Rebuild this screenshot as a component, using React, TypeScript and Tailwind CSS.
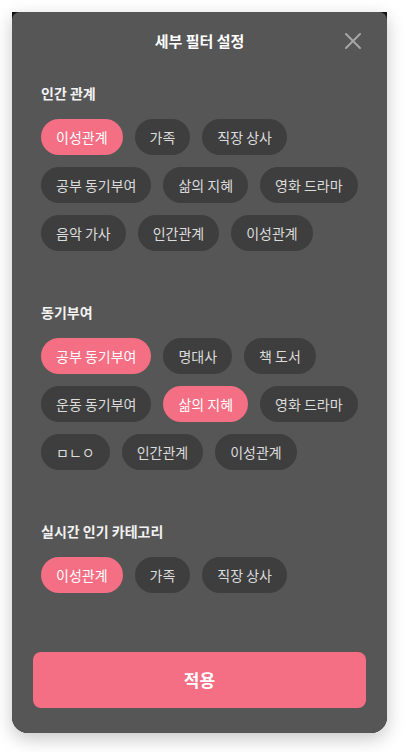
type Chip = { label: string; active?: boolean };

const sections: { title: string; chips: Chip[] }[] = [
  {
    title: "인간 관계",
    chips: [
      { label: "이성관계", active: true },
      { label: "가족" },
      { label: "직장 상사" },
      { label: "공부 동기부여" },
      { label: "삶의 지혜" },
      { label: "영화 드라마" },
      { label: "음악 가사" },
      { label: "인간관계" },
      { label: "이성관계" },
    ],
  },
  {
    title: "동기부여",
    chips: [
      { label: "공부 동기부여", active: true },
      { label: "명대사" },
      { label: "책 도서" },
      { label: "운동 동기부여" },
      { label: "삶의 지혜", active: true },
      { label: "영화 드라마" },
      { label: "ㅁㄴㅇ" },
      { label: "인간관계" },
      { label: "이성관계" },
    ],
  },
  {
    title: "실시간 인기 카테고리",
    chips: [
      { label: "이성관계", active: true },
      { label: "가족" },
      { label: "직장 상사" },
    ],
  },
];

export default function App() {
  return (
    <div
      className="min-h-[752px] bg-white p-3"
      style={{ fontFamily: '"Noto Sans CJK KR", "Noto Sans", sans-serif' }}
    >
      <div className="w-[375px] rounded-b-2xl bg-[#111] shadow-[0_6px_18px_rgba(0,0,0,0.22)]">
        <div className="flex flex-col rounded-t-lg rounded-b-2xl bg-[#565656] pb-[25px]">
          <header className="relative flex h-[58px] items-center justify-center">
            <h1 className="text-[15px] font-bold text-white">세부 필터 설정</h1>
            <button
              type="button"
              aria-label="닫기"
              className="absolute right-[26px] top-1/2 -translate-y-1/2 text-[#a6a6a6]"
            >
              <svg width="16" height="16" viewBox="0 0 16 16" fill="none">
                <path
                  d="M1 1L15 15M15 1L1 15"
                  stroke="currentColor"
                  strokeWidth="2"
                  strokeLinecap="round"
                />
              </svg>
            </button>
          </header>

          <div className="flex flex-col gap-[52px] px-[29px] pt-[14px]">
            {sections.map((section) => (
              <section key={section.title}>
                <h2 className="text-[14px] leading-[19px] font-bold text-[#f2f2f2]">
                  {section.title}
                </h2>
                <div className="mt-[16px] flex flex-wrap gap-3">
                  {section.chips.map((chip, i) => (
                    <button
                      key={`${chip.label}-${i}`}
                      type="button"
                      className={`flex h-9 items-center rounded-full px-[15px] text-[14px] ${
                        chip.active
                          ? "bg-[#f46e84] text-white"
                          : "bg-[#3e3e3e] text-[#dcdcdc]"
                      }`}
                    >
                      {chip.label}
                    </button>
                  ))}
                </div>
              </section>
            ))}
          </div>

          <button
            type="button"
            className="mx-[21px] mt-[59px] h-[56px] rounded-lg bg-[#f46e84] text-[17px] font-bold text-white"
          >
            적용
          </button>
        </div>
      </div>
    </div>
  );
}
